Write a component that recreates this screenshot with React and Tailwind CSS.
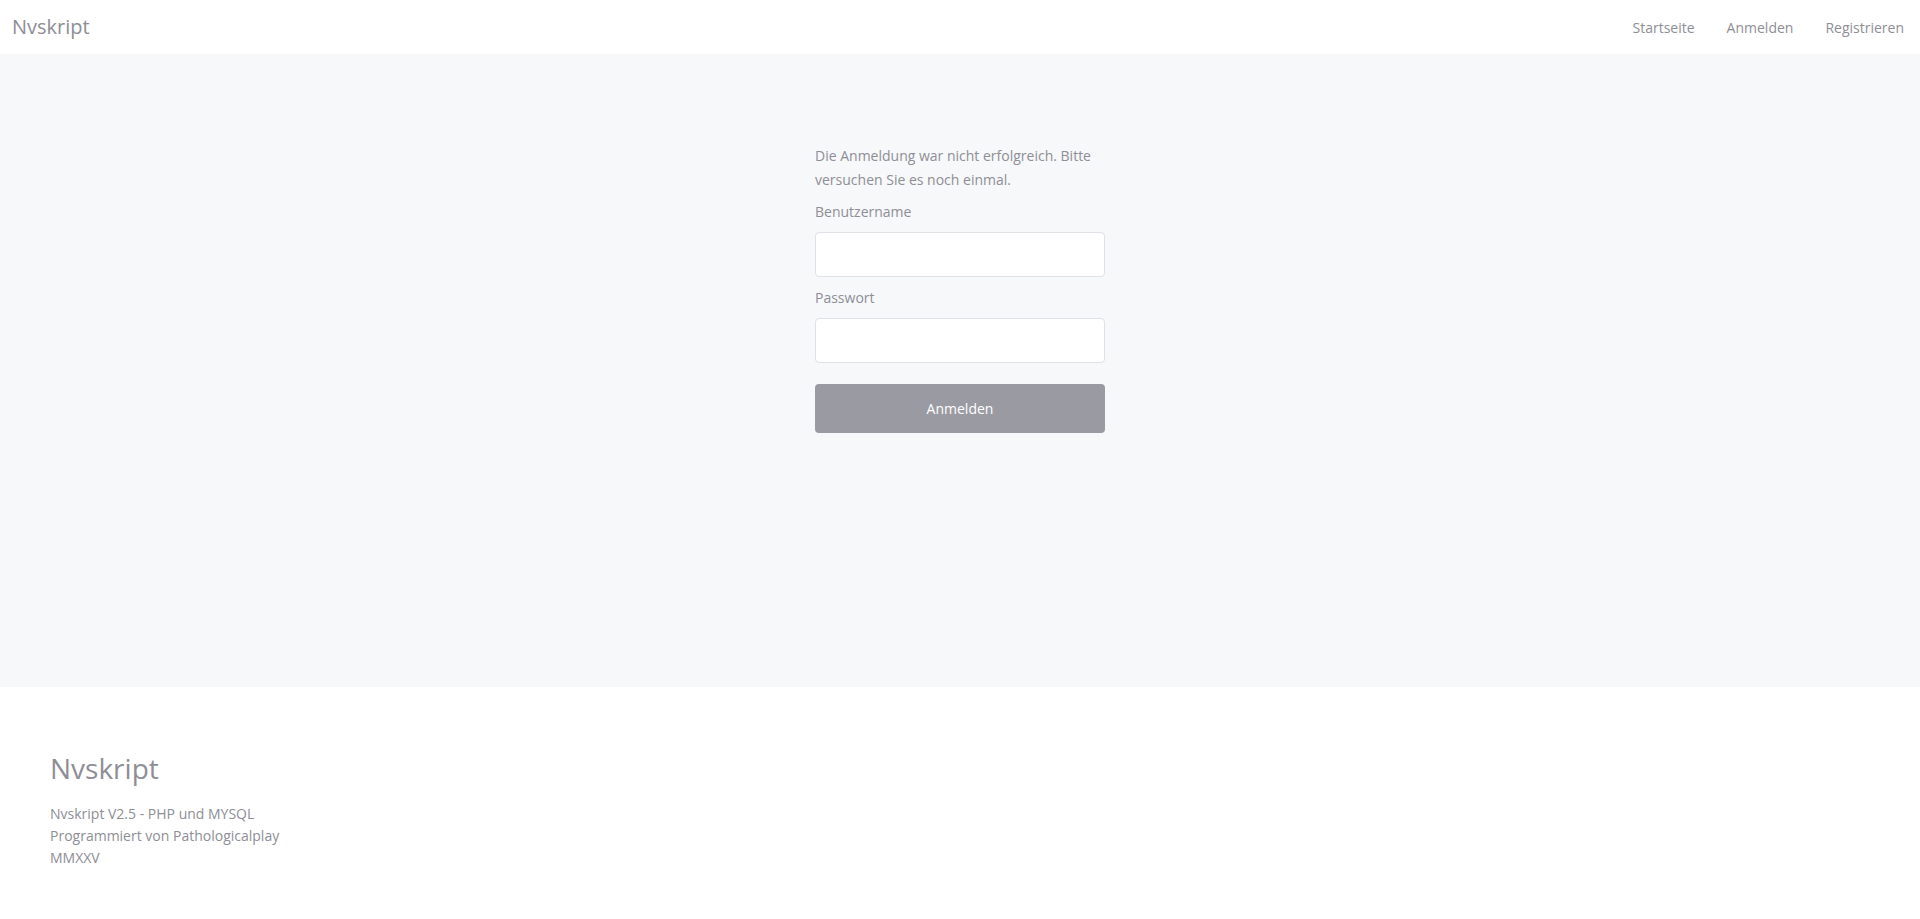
import React, { useState } from "react";

export default function App() {
  const [form, setForm] = useState({ username: "", password: "" });

  return (
    <div className="min-h-screen bg-white text-[#8e8e96]" style={{ fontFamily: '"Open Sans", sans-serif' }}>
      <header className="h-[54px] flex items-center justify-between bg-white">
        <a className="pl-3 text-[20px] text-[#8e8e96]">Nvskript</a>
        <nav className="flex items-center text-[14px]">
          <a className="px-4">Startseite</a>
          <a className="px-4">Anmelden</a>
          <a className="px-4">Registrieren</a>
        </nav>
      </header>

      <main className="h-[633px] bg-[#f7f8fa] pt-[90px]">
        <form className="w-[290px] mx-auto text-[14px] leading-6" onSubmit={e => e.preventDefault()}>
          <p className="mb-[8px]">Die Anmeldung war nicht erfolgreich. Bitte versuchen Sie es noch einmal.</p>
          <label className="block mb-[8px]">Benutzername</label>
          <input
            type="text"
            className="block w-full h-[45px] bg-white border border-[#dfe1e6] rounded-[4px] px-3 outline-none"
            value={form.username}
            onChange={e => setForm({ ...form, username: e.target.value })}
          />
          <label className="block mt-[9px] mb-[8px]">Passwort</label>
          <input
            type="password"
            className="block w-full h-[45px] bg-white border border-[#dfe1e6] rounded-[4px] px-3 outline-none"
            value={form.password}
            onChange={e => setForm({ ...form, password: e.target.value })}
          />
          <button
            type="submit"
            className="block w-full h-[49px] mt-[21px] bg-[#9a9aa2] text-white rounded-[4px] text-[14px]"
          >
            Anmelden
          </button>
        </form>
      </main>

      <footer className="bg-white pt-[64px] pl-[50px] pb-10">
        <h2 className="text-[28px] leading-[35px]">Nvskript</h2>
        <div className="mt-[17px] text-[14px] leading-[22px]">
          <p>Nvskript V2.5 - PHP und MYSQL</p>
          <p>Programmiert von Pathologicalplay</p>
          <p>MMXXV</p>
        </div>
      </footer>
    </div>
  );
}
